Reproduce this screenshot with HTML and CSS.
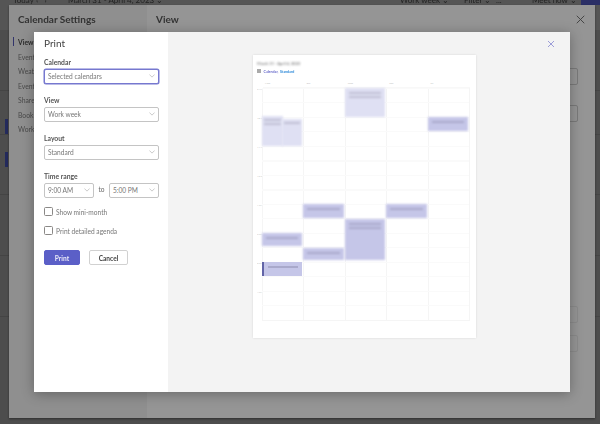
FILE: index.html
```html
<!DOCTYPE html>
<html lang="en">
<head>
    <meta charset="UTF-8">
    <meta name="viewport" content="width=device-width, initial-scale=1.0">
    <title>Print calendar</title>
    <link rel="stylesheet" href="styles.css">
</head>
<body>
    <!-- app behind the dialogs -->
    <div class="app">
        <div class="topbar">
            <span class="today">Today</span>
            <span class="nav-arrows">&lsaquo; &nbsp; &rsaquo;</span>
            <span class="range">March 31 - April 4, 2023 &#8964;</span>
            <span class="work-week">Work week &#8964;</span>
            <span class="filter">Filter &#8964;</span>
            <span class="more">...</span>
            <span class="meet">Meet now &#8964;</span>
            <span class="new-btn"></span>
        </div>
        <div class="app-rows">
            <div class="app-row"></div>
            <div class="app-row first-ev"><span class="app-event"></span></div>
            <div class="app-row second-ev"><span class="app-event"></span></div>
            <div class="app-row"></div>
            <div class="app-row"></div>
        </div>
    </div>

    <!-- settings dialog -->
    <div class="settings">
        <div class="settings-side">
            <div class="settings-title">Calendar Settings</div>
            <ul class="settings-nav">
                <li class="active">View</li>
                <li>Events</li>
                <li>Weather</li>
                <li>Events</li>
                <li>Shared</li>
                <li>Bookings</li>
                <li>Work</li>
            </ul>
        </div>
        <div class="settings-main">
            <div class="settings-head">
                <span class="settings-heading">View</span>
                <svg class="settings-close" viewBox="0 0 12 12"><path d="M1 1l10 10M11 1L1 11"/></svg>
            </div>
            <div class="peek-buttons">
                <div class="peek-btn"></div>
                <div class="peek-btn"></div>
            </div>
            <div class="peek-buttons peek-low">
                <div class="peek-btn faint"></div>
                <div class="peek-btn faint"></div>
            </div>
        </div>
    </div>

    <!-- print dialog -->
    <div class="print-dialog">
        <form class="print-form">
            <h1>Print</h1>

            <label class="field-label">Calendar</label>
            <div class="select focused">Selected calendars<svg class="chev" viewBox="0 0 8 5"><path d="M.5.5L4 4 7.5.5"/></svg></div>

            <label class="field-label">View</label>
            <div class="select">Work week<svg class="chev" viewBox="0 0 8 5"><path d="M.5.5L4 4 7.5.5"/></svg></div>

            <label class="field-label">Layout</label>
            <div class="select">Standard<svg class="chev" viewBox="0 0 8 5"><path d="M.5.5L4 4 7.5.5"/></svg></div>

            <label class="field-label">Time range</label>
            <div class="time-row">
                <div class="select">9:00 AM<svg class="chev" viewBox="0 0 8 5"><path d="M.5.5L4 4 7.5.5"/></svg></div>
                <span class="to">to</span>
                <div class="select">5:00 PM<svg class="chev" viewBox="0 0 8 5"><path d="M.5.5L4 4 7.5.5"/></svg></div>
            </div>

            <div class="check"><span class="box"></span>Show mini-month</div>
            <div class="check"><span class="box"></span>Print detailed agenda</div>

            <div class="actions">
                <button type="button" class="btn primary">Print</button>
                <button type="button" class="btn">Cancel</button>
            </div>
        </form>

        <div class="preview">
            <svg class="preview-close" viewBox="0 0 8 8"><path d="M1 1l6 6M7 1L1 7"/></svg>
            <div class="paper">
                <div class="paper-range">March 31 - April 4, 2023</div>
                <div class="paper-cal">
                    <span class="cal-icon"></span>
                    <span class="cal-name">Calendar,</span>
                    <span class="cal-layout">Standard</span>
                </div>
                <div class="week">
                    <div class="days">
                        <span>Mon</span><span>Tue</span><span>Wed</span><span>Thu</span><span>Fri</span>
                    </div>
                    <div class="week-body">
                        <div class="hours">
                            <span>9 AM</span><span>10 AM</span><span>11 AM</span><span>12 PM</span>
                            <span>1 PM</span><span>2 PM</span><span>3 PM</span><span>4 PM</span>
                        </div>
                        <div class="slots">
                            <div class="ev light ev-mon-a"><i></i><i></i></div>
                            <div class="ev light ev-mon-b"><i></i></div>
                            <div class="ev light ev-wed-a"><i></i><i></i></div>
                            <div class="ev ev-fri"><i></i></div>
                            <div class="ev ev-tue-a"><i></i></div>
                            <div class="ev ev-thu"><i></i></div>
                            <div class="ev ev-wed-b"><i></i><i></i></div>
                            <div class="ev ev-mon-c"><i></i></div>
                            <div class="ev ev-tue-b"><i></i></div>
                            <div class="ev ev-mon-d"><i></i></div>
                        </div>
                    </div>
                </div>
            </div>
        </div>
    </div>
</body>
</html>
```

FILE: styles.css
```css
html, body {
    margin: 0;
    padding: 0;
    width: 600px;
    height: 424px;
    overflow: hidden;
}

body {
    font-family: Lato, "Liberation Sans", sans-serif;
    background-color: #4c4c4c;
    color: #4a4a4a;
}

/* app behind */
.app {
    height: 424px;
    background-color: #4d4d4d;
}

.topbar {
    height: 30px;
    position: relative;
    background-color: #555;
    color: #222;
    font-size: 8px;
    line-height: 10px;
}

.topbar span {
    position: absolute;
    top: -5px;
    white-space: nowrap;
    filter: blur(0.4px);
}

.today { left: 13px; }
.nav-arrows { left: 36px; }
.range { left: 68px; }
.work-week { left: 400px; }
.filter { left: 464px; }
.more { left: 496px; }
.meet { left: 532px; }

.topbar .new-btn {
    left: 581px;
    top: 0;
    width: 19px;
    height: 5px;
    background-color: #2b2f66;
}

.app-rows {
    display: flex;
    flex-direction: column;
}

.app-row {
    height: 60px;
    border-bottom: 1px solid #444;
}

.app-row.first-ev {
    height: 44px;
    padding-top: 28px;
    box-sizing: border-box;
}

.app-row.second-ev {
    height: 60px;
    padding-top: 17px;
    box-sizing: border-box;
}

.app-event {
    display: block;
    width: 3px;
    height: 15px;
    margin-left: 5px;
    background-color: #232a5c;
}

/* settings dialog */
.settings {
    position: absolute;
    left: 9px;
    top: 5px;
    width: 586px;
    height: 413px;
    display: flex;
    background-color: #959595;
    box-shadow: 0 1px 2px rgba(0, 0, 0, 0.4);
}

.settings-side {
    width: 138px;
    background-color: #8f8f8f;
}

.settings-title {
    font-size: 10px;
    font-weight: 700;
    color: #333;
    padding: 6px 0 0 9px;
    line-height: 16px;
    filter: blur(0.3px);
}

.settings-nav {
    list-style: none;
    margin: 10px 0 0;
    padding: 0 0 0 9px;
    font-size: 6.8px;
    line-height: 10px;
    color: #4a4a4a;
    filter: blur(0.3px);
}

.settings-nav li {
    margin-bottom: 4.5px;
}

.settings-nav .active {
    color: #2a2a2a;
    font-weight: 700;
    position: relative;
}

.settings-nav .active::before {
    content: "";
    position: absolute;
    left: -5px;
    top: 0;
    width: 1px;
    height: 9px;
    border-left: 1.5px solid #32346b;
}

.settings-main {
    flex: 1;
}

.settings-head {
    display: flex;
    justify-content: space-between;
    align-items: center;
    padding: 6px 10px 0 9px;
    height: 16px;
}

.settings-heading {
    font-size: 10px;
    font-weight: 700;
    color: #333;
    filter: blur(0.3px);
}

.settings-close {
    width: 9px;
    height: 9px;
    fill: none;
    stroke: #3d3d3d;
    stroke-width: 1.2;
}

.peek-buttons {
    display: flex;
    flex-direction: column;
    align-items: flex-end;
    gap: 20px;
    margin: 41px 17px 0 0;
}

.peek-low {
    margin-top: 184px;
    gap: 12px;
}

.peek-btn {
    width: 60px;
    height: 15px;
    border: 1px solid #7a7a7a;
    border-radius: 2px;
}

.peek-btn.faint {
    border-color: #8b8b8b;
}

/* print dialog */
.print-dialog {
    position: absolute;
    left: 34px;
    top: 32px;
    width: 536px;
    height: 360px;
    display: flex;
    box-shadow: 0 2px 12px rgba(0, 0, 0, 0.3);
}

.print-form {
    width: 124px;
    padding: 0 0 0 10px;
    background-color: #fff;
}

.print-form > * {
    filter: blur(0.25px);
}

h1 {
    margin: 0;
    padding-top: 4px;
    font-size: 10px;
    font-weight: 400;
    line-height: 14px;
    color: #444;
}

.field-label {
    display: block;
    margin: 0 0 2px;
    font-size: 6.8px;
    font-weight: 700;
    line-height: 10px;
    color: #555;
}

h1 + .field-label {
    margin-top: 7px;
}

.select {
    box-sizing: border-box;
    position: relative;
    width: 115px;
    height: 15px;
    margin-bottom: 11px;
    padding-left: 3px;
    border: 1px solid #c4c4c4;
    border-radius: 2px;
    font-size: 6.6px;
    line-height: 13px;
    color: #777;
    background-color: #fff;
}

.select.focused {
    border-color: #7678cf;
    box-shadow: 0 0 0 0.5px #7678cf;
}

.chev {
    position: absolute;
    right: 3px;
    top: 4px;
    width: 6px;
    height: 4px;
    fill: none;
    stroke: #999;
    stroke-width: 0.7;
}

.time-row {
    display: flex;
    align-items: flex-start;
    width: 115px;
}

.time-row .select {
    width: 50px;
    margin-bottom: 9px;
}

.to {
    flex: 1;
    text-align: center;
    font-size: 6.6px;
    line-height: 13px;
    color: #666;
}

.check {
    display: flex;
    align-items: center;
    gap: 3px;
    height: 9px;
    margin-bottom: 10px;
    font-size: 6.6px;
    color: #777;
}

.box {
    box-sizing: border-box;
    width: 9px;
    height: 9px;
    border: 1px solid #8a8886;
    border-radius: 1.5px;
}

.actions {
    display: flex;
    gap: 9px;
    margin-top: 15px;
}

.btn {
    box-sizing: border-box;
    width: 39px;
    height: 15px;
    padding: 0;
    border: 1px solid #d1d1d1;
    border-radius: 2px;
    background-color: #fff;
    font-family: inherit;
    font-size: 6.6px;
    font-weight: 700;
    color: #444;
}

.btn.primary {
    width: 36px;
    border-color: #5b5fc7;
    background-color: #5b5fc7;
    color: #e8e8f8;
}

/* preview */
.preview {
    flex: 1;
    position: relative;
    background-color: #f3f3f3;
    padding: 23px 0 0 85px;
}

.preview-close {
    position: absolute;
    left: 379px;
    top: 8px;
    width: 8px;
    height: 8px;
    fill: none;
    stroke: #9c9dd8;
    stroke-width: 1;
}

.paper {
    box-sizing: border-box;
    width: 223px;
    height: 283px;
    padding: 6px 6px 0 4px;
    background-color: #fff;
    box-shadow: 0 0 2px rgba(0, 0, 0, 0.12);
}

.paper-range {
    font-size: 4px;
    font-weight: 700;
    line-height: 6px;
    color: #888;
    filter: blur(1px);
}

.paper-cal {
    display: flex;
    align-items: center;
    gap: 1.5px;
    height: 6px;
    margin-top: 1px;
    font-size: 3.6px;
    font-weight: 700;
    filter: blur(0.3px);
}

.cal-icon {
    width: 4px;
    height: 4px;
    margin-right: 1px;
    background-color: #aaa;
}

.cal-name { color: #6a6ccb; }
.cal-layout { color: #2b88d8; }

.week {
    margin-top: 6px;
}

.days {
    display: grid;
    grid-template-columns: repeat(5, 41.4px);
    height: 7px;
    margin-left: 6px;
    font-size: 2.5px;
    line-height: 7px;
    color: #bbb;
    border-bottom: 1px solid #f8f8f8;
}

.days span {
    padding-left: 2px;
}

.week-body {
    display: flex;
}

.hours {
    box-sizing: border-box;
    display: flex;
    flex-direction: column;
    width: 6px;
    font-size: 2.5px;
    line-height: 4px;
    color: #bbb;
    white-space: nowrap;
    overflow: hidden;
}

.hours span {
    height: 29px;
}

/* half hour rows, one row per 14.5px */
.slots {
    display: grid;
    grid-template-columns: repeat(5, 41.4px);
    grid-template-rows: repeat(16, 14.5px);
    background-image:
        repeating-linear-gradient(to bottom, #fafafa 0, #fafafa 1px, transparent 1px, transparent 14.5px),
        repeating-linear-gradient(to right, #f5f5f5 0, #f5f5f5 1px, transparent 1px, transparent 41.4px);
    border-right: 1px solid #f5f5f5;
    border-bottom: 1px solid #f5f5f5;
}

.ev {
    box-sizing: border-box;
    margin: 0 1px 0 0;
    padding: 4px 4px 0;
    background-color: #c5c6e8;
    filter: blur(1px);
}

.ev.light {
    background-color: #dfe0f3;
}

.ev i {
    display: block;
    height: 2px;
    margin-bottom: 2px;
    background-color: #a9a9cb;
}

.ev.light i {
    background-color: #c0c0d4;
}

.ev-wed-a { grid-column: 3; grid-row: 1 / span 2; }
.ev-mon-a { grid-column: 1; grid-row: 3 / span 2; margin-right: 20px; margin-top: -1px; padding: 3px 2px 0; }
.ev-mon-b { grid-column: 1; grid-row: 3 / span 2; margin-left: 20px; margin-top: 2px; padding: 3px 2px 0; }
.ev-fri { grid-column: 5; grid-row: 3; margin-bottom: 1px; }
.ev-tue-a { grid-column: 2; grid-row: 9; margin-bottom: 1px; }
.ev-thu { grid-column: 4; grid-row: 9; margin-bottom: 1px; }
.ev-wed-b { grid-column: 3; grid-row: 10 / span 3; margin-bottom: 2px; }
.ev-mon-c { grid-column: 1; grid-row: 11; margin-bottom: 2px; }
.ev-tue-b { grid-column: 2; grid-row: 12; margin-bottom: 2px; }
.ev-mon-d { grid-column: 1; grid-row: 13; margin-bottom: 1px; border-left: 2px solid #6264a7; filter: blur(0.4px); }
```
